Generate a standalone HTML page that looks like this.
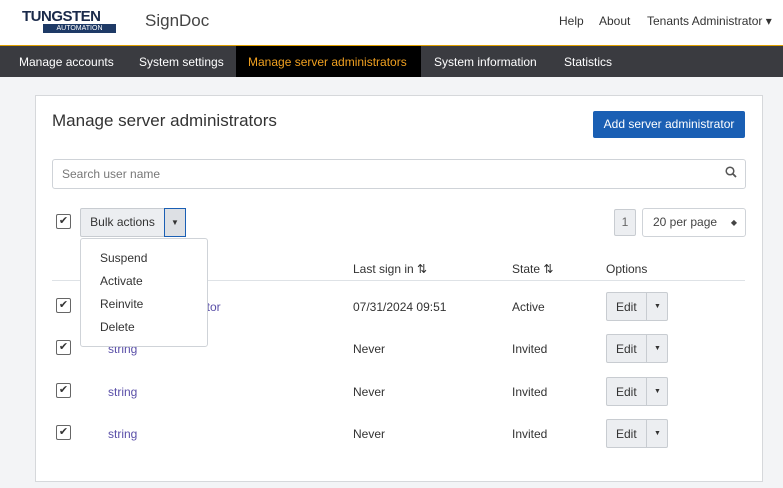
<!DOCTYPE html><html><head><style>
body{margin:0;width:783px;height:488px;background:#f3f4f6;font-family:"Liberation Sans",sans-serif;font-size:12px;color:#333;position:relative;overflow:hidden}
.a{position:absolute;white-space:nowrap}
.hdr{left:0;top:0;width:783px;height:45px;background:#fff;border-bottom:1px solid #e0a000}
.nav{left:0;top:46px;width:783px;height:31px;background:#3a3b40}
.nav span{position:absolute;top:9px;color:#fff;font-size:12px}
.panel{left:35px;top:95px;width:726px;height:385px;background:#fff;border:1px solid #d6d8db}
.cb{width:13px;height:13px;border:1px solid #666;border-radius:2px;background:#fff;font-size:11px;line-height:13px;text-align:center;color:#333}
.btn{background:#eceef1;border:1px solid #c8ccd1;border-radius:2px}
.lnk{color:#5a4fa8}
</style></head><body>
<div class="a hdr"></div>
<div class="a" style="left:22px;top:8px;font:bold 15px 'Liberation Sans';color:#1a2a4a;letter-spacing:-0.5px">TUNGSTEN</div>
<div class="a" style="left:43px;top:24px;width:73px;height:9px;background:#1e3a66;color:#fff;font-size:7px;line-height:9px;text-align:center">AUTOMATION</div>
<div class="a" style="left:145px;top:11px;font-size:17px;color:#444">SignDoc</div>
<div class="a" style="left:559px;top:14px">Help</div>
<div class="a" style="left:599px;top:14px">About</div>
<div class="a" style="left:647px;top:14px">Tenants Administrator ▾</div>
<div class="a nav"><span style="left:19px">Manage accounts</span><span style="left:139px">System settings</span>
<div class="a" style="left:236px;top:0;width:185px;height:31px;background:#000"></div>
<span style="left:248px;color:#f0a020">Manage server administrators</span><span style="left:434px">System information</span><span style="left:564px">Statistics</span></div>
<div class="a panel"></div>
<div class="a" style="left:52px;top:111px;font-size:17px;color:#333">Manage server administrators</div>
<div class="a" style="left:593px;top:111px;width:152px;height:27px;background:#1a5fb4;border-radius:2px;color:#fff;line-height:27px;text-align:center">Add server administrator</div>
<div class="a" style="left:52px;top:159px;width:692px;height:28px;border:1px solid #cfd3d8;border-radius:3px"></div>
<div class="a" style="left:62px;top:167px;color:#777">Search user name</div>
<svg class="a" style="left:725px;top:166px" width="12" height="12"><circle cx="5" cy="5" r="3.8" fill="none" stroke="#555" stroke-width="1.5"/><path d="M8 8l3 3" stroke="#555" stroke-width="1.8"/></svg>
<div class="a cb" style="left:56px;top:214px">✔</div>
<div class="a btn" style="left:80px;top:208px;width:83px;height:27px;line-height:27px;text-align:center">Bulk actions</div>
<div class="a" style="left:164px;top:208px;width:20px;height:27px;background:#dde0e4;border:1px solid #1a5fb4;font-size:8px;line-height:27px;text-align:center">▼</div>
<div class="a btn" style="left:614px;top:209px;width:20px;height:25px;line-height:25px;text-align:center;color:#666">1</div>
<div class="a" style="left:642px;top:208px;width:102px;height:27px;border:1px solid #cfd3d8;border-radius:3px;line-height:27px;color:#444"><span style="margin-left:10px">20 per page</span><span style="position:absolute;right:8px;font-size:8px">◆</span></div>
<div class="a" style="left:52px;top:280px;width:693px;height:1px;background:#dee2e6"></div>
<div class="a" style="left:353px;top:262px">Last sign in ⇅</div>
<div class="a" style="left:512px;top:262px">State ⇅</div>
<div class="a" style="left:606px;top:262px">Options</div>
<div class="a cb" style="left:56px;top:298px">✔</div><div class="a lnk" style="left:200px;top:300px">ator</div><div class="a" style="left:353px;top:300px">07/31/2024 09:51</div><div class="a" style="left:512px;top:300px">Active</div>
<div class="a cb" style="left:56px;top:340px">✔</div><div class="a lnk" style="left:108px;top:342px">string</div><div class="a" style="left:353px;top:342px">Never</div><div class="a" style="left:512px;top:342px">Invited</div>
<div class="a cb" style="left:56px;top:383px">✔</div><div class="a lnk" style="left:108px;top:385px">string</div><div class="a" style="left:353px;top:385px">Never</div><div class="a" style="left:512px;top:385px">Invited</div>
<div class="a cb" style="left:56px;top:425px">✔</div><div class="a lnk" style="left:108px;top:427px">string</div><div class="a" style="left:353px;top:427px">Never</div><div class="a" style="left:512px;top:427px">Invited</div>
<div class="a btn" style="left:606px;top:292px;width:60px;height:27px"><span class="a" style="left:9px;top:7px">Edit</span><span class="a" style="left:39px;top:0;height:27px;border-left:1px solid #c8ccd1;width:21px;font-size:7px;line-height:27px;text-align:center">▼</span></div>
<div class="a btn" style="left:606px;top:334px;width:60px;height:27px"><span class="a" style="left:9px;top:7px">Edit</span><span class="a" style="left:39px;top:0;height:27px;border-left:1px solid #c8ccd1;width:21px;font-size:7px;line-height:27px;text-align:center">▼</span></div>
<div class="a btn" style="left:606px;top:377px;width:60px;height:27px"><span class="a" style="left:9px;top:7px">Edit</span><span class="a" style="left:39px;top:0;height:27px;border-left:1px solid #c8ccd1;width:21px;font-size:7px;line-height:27px;text-align:center">▼</span></div>
<div class="a btn" style="left:606px;top:419px;width:60px;height:27px"><span class="a" style="left:9px;top:7px">Edit</span><span class="a" style="left:39px;top:0;height:27px;border-left:1px solid #c8ccd1;width:21px;font-size:7px;line-height:27px;text-align:center">▼</span></div>
<div class="a" style="left:80px;top:238px;width:126px;height:107px;background:#fff;border:1px solid #cfd3d8;border-radius:3px">
<div class="a" style="left:19px;top:12px">Suspend</div><div class="a" style="left:19px;top:35px">Activate</div><div class="a" style="left:19px;top:58px">Reinvite</div><div class="a" style="left:19px;top:81px">Delete</div></div>
</body></html>
